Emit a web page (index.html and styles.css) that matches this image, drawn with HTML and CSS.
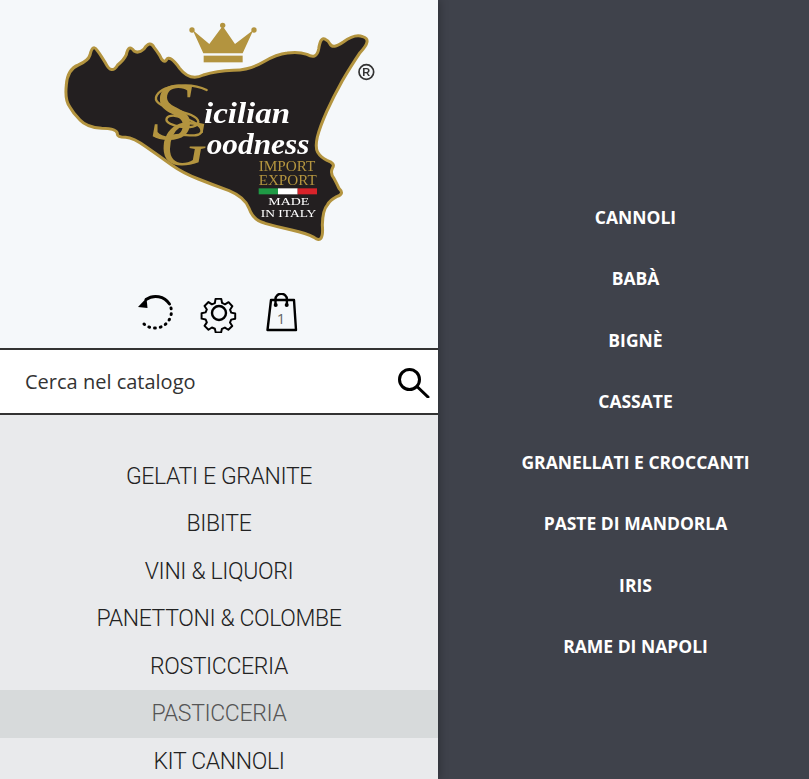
FILE: index.html
```html
<!DOCTYPE html>
<html lang="it">
<head>
<meta charset="utf-8">
<title>Sicilian Goodness</title>
<link rel="stylesheet" href="styles.css">
</head>
<body>
<div class="page">
  <aside class="side">
    <header class="head">
      <svg class="logo" viewBox="0 0 1020 720" width="340" height="240" role="img" aria-label="Sicilian Goodness">
        <path class="island" d="M59 290 Q44 270 49 225 Q52 178 85 165 Q115 152 120 135 Q128 100 142 122 Q150 132 167 160 Q185 195 203 165 Q222 150 229 134 Q236 100 252 123 Q265 132 282 117 Q300 90 312 112 Q320 122 329 136 Q340 162 349 150 Q358 132 389 175 Q420 215 460 195 Q500 183 550 181 Q600 180 640 156 Q680 132 712 129 Q745 124 771 133 Q800 150 806 117 Q812 78 826 88 Q836 92 840 102 Q848 118 880 96 Q915 70 938 80 Q968 88 930 128 Q905 165 877 212 Q850 260 830 305 Q810 350 802 381 Q795 412 803 427 Q812 442 831 451 Q858 460 847 475 Q840 490 852 505 Q860 520 867 535 Q885 552 860 560 Q840 570 832 585 Q818 600 817 645 Q822 705 792 682 Q770 670 725 660 Q680 650 645 640 Q610 632 597 595 Q585 562 537 542 Q490 525 445 507 Q400 490 365 465 Q330 440 290 412 Q250 383 227 382 Q200 382 202 370 Q200 356 155 355 Q110 352 90 330 Q70 310 59 290 Z"/>
        <path class="crown" d="M428 60 L478 102 L518 48 L555 102 L610 60 L578 130 L460 130 Z"/>
        <rect class="crown" x="461" y="137" width="117" height="20"/>
        <circle class="crown" cx="426" cy="60" r="8"/><circle class="crown" cx="518" cy="46" r="8"/><circle class="crown" cx="612" cy="60" r="8"/>
        <text class="script" x="462" y="340" textLength="258" lengthAdjust="spacingAndGlyphs">icilian</text>
        <text class="script" x="470" y="432" textLength="308" lengthAdjust="spacingAndGlyphs">oodness</text>
        <text class="bigs" x="305" y="388">S</text>
        <text class="bigg" x="330" y="464">G</text>
        <path class="swirl" d="M470 240 C420 215 330 225 318 262 C310 300 440 300 445 335 C445 365 340 350 350 325 C365 300 460 340 455 365 C440 395 360 350 345 400"/>
        <text class="imp" x="626" y="484" textLength="170" lengthAdjust="spacingAndGlyphs">IMPORT</text>
        <text class="imp" x="626" y="525" textLength="174" lengthAdjust="spacingAndGlyphs">EXPORT</text>
        <rect x="626" y="535" width="58" height="18" fill="#1f9a45"/>
        <rect x="684" y="535" width="59" height="18" fill="#fff"/>
        <rect x="743" y="535" width="58" height="18" fill="#d8232a"/>
        <text class="made" x="655" y="586" textLength="123" lengthAdjust="spacingAndGlyphs">MADE</text>
        <text class="made" x="632" y="622" textLength="167" lengthAdjust="spacingAndGlyphs">IN ITALY</text>
        <circle class="reg" cx="949" cy="186" r="22"/>
        <text class="regt" x="949" y="198">R</text>
      </svg>
      <div class="tools">
        <svg class="tool" viewBox="0 0 40 40" width="40" height="40" aria-hidden="true">
          <path class="solid" d="M10 6.500 A16.500 16.500 0 0 1 33.500 11"/>
          <path class="dash" d="M35 15 A16.500 16.500 0 0 1 8 31"/>
          <path class="fill" d="M2 14 L10.500 5 L11.500 15 Z"/>
        </svg>
        <svg class="tool" viewBox="0 0 40 40" width="40" height="40" aria-hidden="true">
          <path class="solid thin" d="M16.500 3.500 h7 l1 5 l3.500 1.600 l4.400-2.600 l4.600 5 l-2.800 4.200 l1.400 3.600 l4.900 1 v6.500 l-4.900 1 l-1.500 3.600 l2.800 4.200 l-4.800 4.600 l-4.200-2.700 l-3.600 1.500 l-1 4.500 h-6.600 l-1-4.600 l-3.600-1.500 l-4.200 2.800 l-4.800-4.800 l2.800-4.200 l-1.500-3.600 l-4.900-1 v-6.600 l4.900-1 l1.500-3.600 l-2.800-4.200 l4.800-4.800 l4.200 2.800 l3.600-1.500 z" transform="translate(3 3) scale(.82)"/>
          <circle class="solid thin" cx="20" cy="20" r="7"/>
        </svg>
        <div class="bag">
          <svg viewBox="0 0 40 40" width="40" height="40" aria-hidden="true">
            <path class="solid thin" d="M9 7 H32 L34 37 H5.500 Z"/>
            <path class="solid thin" d="M13.500 12 V6 a5.700 5.200 0 0 1 11.400 0 V12"/>
            <circle class="fill" cx="13.700" cy="12" r="2"/><circle class="fill" cx="24.700" cy="12" r="2"/>
          </svg>
          <span class="count">1</span>
        </div>
      </div>
    </header>
    <div class="search">
      <span class="ph">Cerca nel catalogo</span>
      <svg viewBox="0 0 32 32" width="32" height="32" aria-hidden="true">
        <circle class="solid" cx="11.500" cy="13.500" r="10"/>
        <path class="solid" d="M19 20.500 L30 31"/>
      </svg>
    </div>
    <nav class="menu">
      <a class="item">GELATI E GRANITE</a>
      <a class="item">BIBITE</a>
      <a class="item">VINI &amp; LIQUORI</a>
      <a class="item">PANETTONI &amp; COLOMBE</a>
      <a class="item">ROSTICCERIA</a>
      <a class="item active">PASTICCERIA</a>
      <a class="item">KIT CANNOLI</a>
    </nav>
  </aside>
  <nav class="sub">
    <a class="subitem">CANNOLI</a>
    <a class="subitem">BABÀ</a>
    <a class="subitem">BIGNÈ</a>
    <a class="subitem">CASSATE</a>
    <a class="subitem">GRANELLATI E CROCCANTI</a>
    <a class="subitem">PASTE DI MANDORLA</a>
    <a class="subitem">IRIS</a>
    <a class="subitem">RAME DI NAPOLI</a>
  </nav>
</div>
</body>
</html>
```
FILE: styles.css
```css
* { box-sizing: border-box; }
html, body { margin: 0; height: 100%; overflow: hidden; }
body { font-family: "Open Sans", sans-serif; }
.page { display: flex; height: 779px; width: 809px; }
.side { width: 438px; flex: none; height: 779px; overflow: hidden; display: flex; flex-direction: column; background: #e9eaec; box-shadow: 2px 0 8px rgba(0,0,0,.25); position: relative; z-index: 1; }
.head { height: 348px; flex: none; background: #f5f8fa; display: flex; flex-direction: column; align-items: flex-start; }
.logo { display: block; margin: 10px 0 0 50px; flex: none; filter: blur(.35px); }
.island { fill: #231f20; stroke: #b3943f; stroke-width: 9; stroke-linejoin: round; }
.crown { fill: #b3943f; }
.bigs { font: italic 400 250px "Liberation Serif", serif; fill: #b3943f; }
.bigg { font: italic 400 195px "Liberation Serif", serif; fill: #b3943f; }
.swirl { fill: none; stroke: #b3943f; stroke-width: 7; stroke-linecap: round; }
.script { font: italic 700 88px "Liberation Serif", serif; fill: #fff; }
.imp { font: 400 41px "Liberation Serif", serif; fill: #b3943f; }
.made { font: 400 33px "Liberation Serif", serif; fill: #fff; }
.reg { fill: none; stroke: #333; stroke-width: 5; }
.regt { font: 700 33px "Liberation Sans", sans-serif; fill: #333; text-anchor: middle; }
.tools { display: flex; align-items: flex-start; margin: 43px 0 0 136px; gap: 23px; height: 40px; }
.tool { flex: none; display: block; }
.solid, .dash { fill: none; stroke: #000; stroke-width: 3; stroke-linecap: round; stroke-linejoin: round; }
.thin { stroke-width: 2.4; }
.dash { stroke-dasharray: .8 5; }
.fill { fill: #000; }
.bag { position: relative; width: 40px; height: 40px; flex: none; }
.bag svg { display: block; }
.count { position: absolute; left: 0; right: 2px; top: 15px; text-align: center; font: 400 15px/20px "Open Sans", sans-serif; color: #666; }
.search { height: 67px; flex: none; background: #fff; border-top: 2px solid #333; border-bottom: 2px solid #333; display: flex; align-items: center; justify-content: space-between; padding: 0 8px 0 25px; }
.ph { font-size: 20px; color: #333; }
.menu { padding-top: 37.7px; display: flex; flex-direction: column; }
.item { display: block; height: 47.5px; text-align: center; font: 300 23px/47.5px Roboto, sans-serif; letter-spacing: -.36px; color: #222; flex: none; }
.item.active { background: #d7dadb; color: #555; }
.sub { flex: 1; background: #3f424b; display: flex; flex-direction: column; align-items: center; padding: 187px 0 0 24px; }
.subitem { height: 61.25px; line-height: 61.25px; font-size: 17.5px; font-weight: 700; color: #fff; flex: none; }
```
